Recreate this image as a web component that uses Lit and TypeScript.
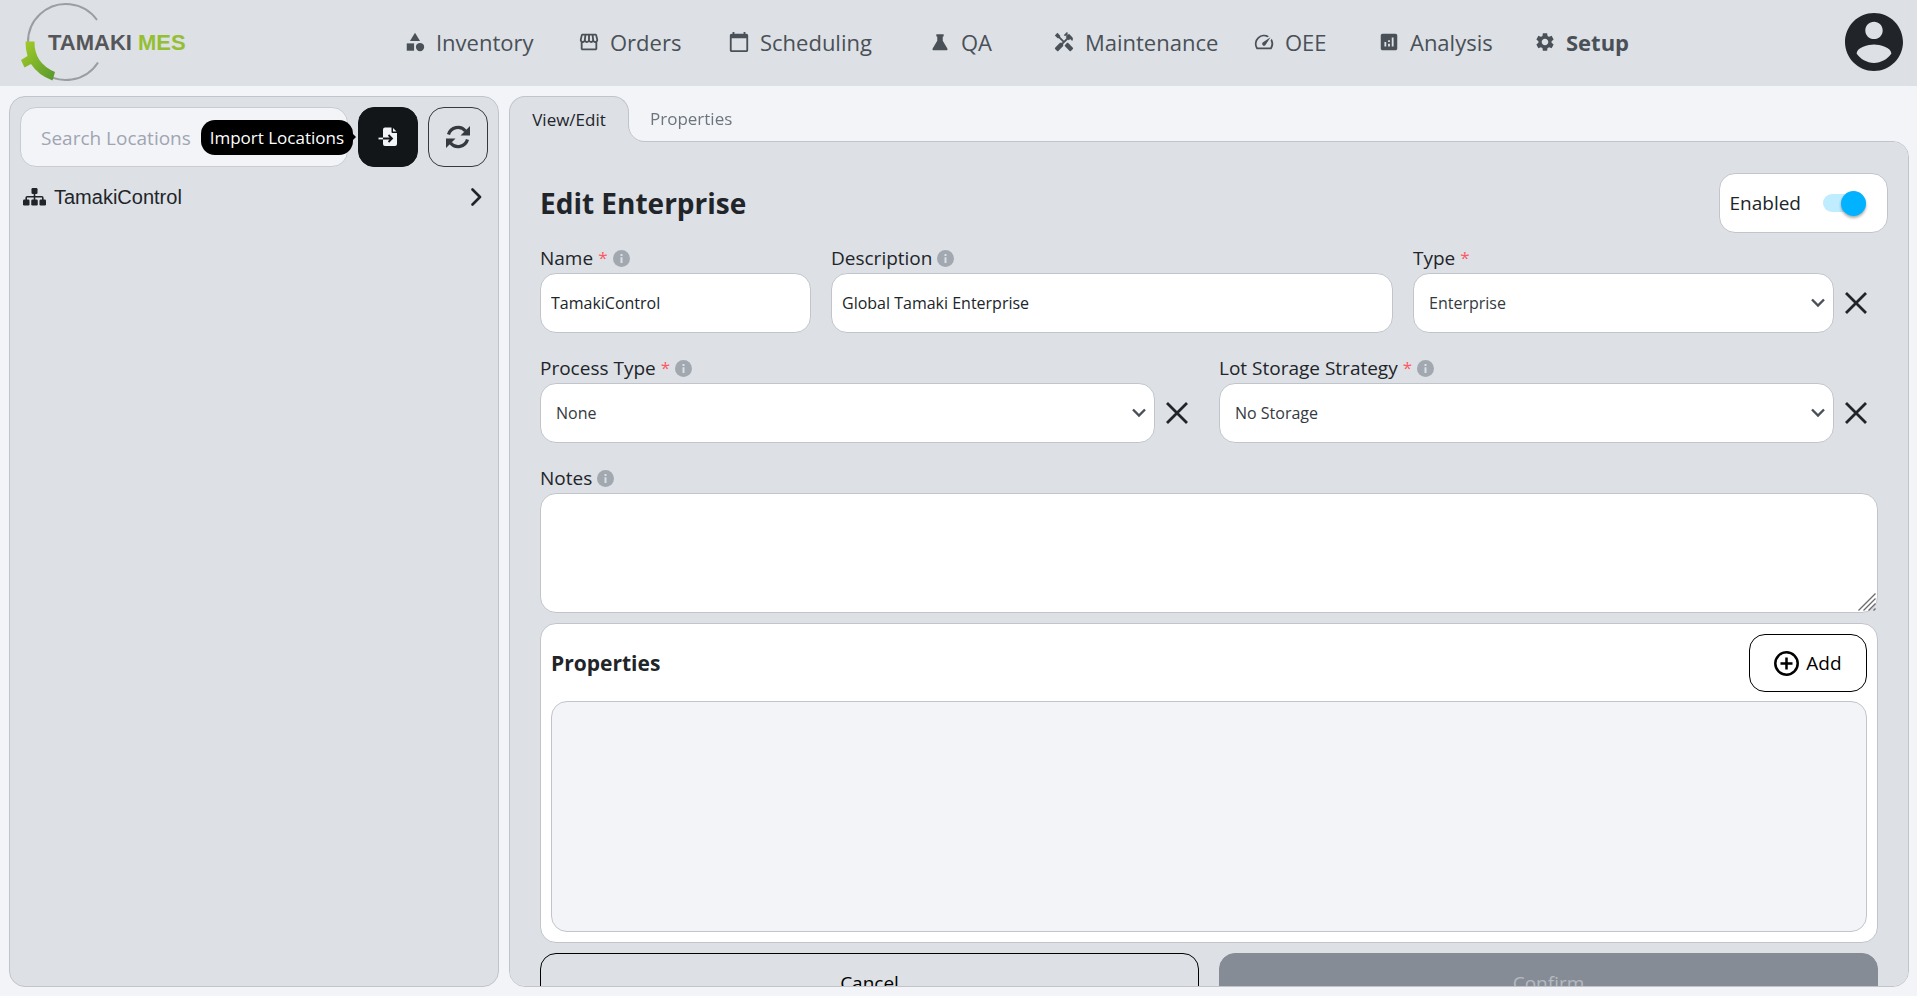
import { LitElement, html, css, svg, nothing, TemplateResult } from "lit";
import { customElement, property } from "lit/decorators.js";
import { classMap } from "lit/directives/class-map.js";

const shapes: Record<string, TemplateResult> = {
  inventory: svg`<path d="M12 2l-5.5 9h11z"/><circle cx="17.5" cy="17.5" r="4.5"/><path d="M3 13.5h8v8H3z"/>`,
  orders: svg`<path d="M21.9 8.89l-1.05-4.37c-.22-.9-1-1.52-1.91-1.52H5.05c-.9 0-1.69.63-1.9 1.52L2.1 8.89c-.24 1.02-.02 2.06.62 2.88.08.11.19.19.28.29V19c0 1.1.9 2 2 2h14c1.1 0 2-.9 2-2v-6.94c.09-.09.2-.18.28-.28.64-.82.87-1.87.62-2.89zm-2.99-3.9l1.05 4.37c.1.42.01.84-.25 1.17-.14.18-.44.47-.94.47-.61 0-1.14-.49-1.21-1.14L16.98 5l1.93-.01zM13 5h1.96l.54 4.52c.05.39-.07.78-.33 1.07-.22.26-.54.41-.95.41-.67 0-1.22-.59-1.22-1.31V5zM8.49 9.52L9.04 5H11v4.69c0 .72-.55 1.31-1.29 1.31-.34 0-.65-.15-.89-.41-.25-.29-.37-.68-.33-1.07zm-4.45-.16L5.05 5h1.97l-.58 4.86c-.08.65-.6 1.14-1.21 1.14-.49 0-.8-.29-.93-.47-.27-.32-.36-.75-.26-1.17zM5 19v-6.03c.08.01.15.03.23.03.87 0 1.66-.36 2.24-.95.6.6 1.4.95 2.31.95.87 0 1.65-.36 2.23-.93.59.57 1.39.93 2.29.93.84 0 1.64-.35 2.24-.95.58.59 1.37.95 2.24.95.08 0 .15-.02.23-.03V19H5z"/>`,
  scheduling: svg`<path d="M20 3h-1V1h-2v2H7V1H5v2H4c-1.1 0-2 .9-2 2v16c0 1.1.9 2 2 2h16c1.1 0 2-.9 2-2V5c0-1.1-.9-2-2-2zm0 18H4V8h16v13z"/>`,
  qa: svg`<path d="M8 3.5h8V6h-1v4.5l5 8.5q.9 2-1 2H5q-1.9 0-1-2l5-8.5V6H8z"/>`,
  maintenance: svg`<path d="M21.67 18.17l-5.3-5.3h-.99l-2.54 2.54v.99l5.3 5.3c.39.39 1.02.39 1.41 0l2.12-2.12c.39-.38.39-1.02 0-1.41z"/><path d="M17.34 10.19l1.41-1.41 2.12 2.12c1.17-1.17 1.17-3.07 0-4.24l-3.54-3.54-1.41 1.41V1.71L15.22 1l-3.54 3.54.71.71h2.83l-1.41 1.41 1.06 1.06-2.89 2.89-4.13-4.13V5.06L4.83 2.04 2 4.87 5.03 7.9h1.41l4.13 4.13-.85.85H7.6l-5.3 5.3c-.39.39-.39 1.02 0 1.41l2.12 2.12c.39.39 1.02.39 1.41 0l5.3-5.3v-2.12l5.15-5.15 1.06 1.05z"/>`,
  oee: svg`<path d="M20.38 8.57l-1.23 1.85a8 8 0 0 1-.22 7.58H5.07A8 8 0 0 1 15.58 6.85l1.85-1.23A10 10 0 0 0 3.35 19a2 2 0 0 0 1.72 1h13.85a2 2 0 0 0 1.74-1 10 10 0 0 0-.27-10.44z"/><path d="M10.59 15.41a2 2 0 0 0 2.83 0l5.66-8.49-8.49 5.66a2 2 0 0 0 0 2.83z"/>`,
  analysis: svg`<path d="M19 3H5c-1.1 0-2 .9-2 2v14c0 1.1.9 2 2 2h14c1.1 0 2-.9 2-2V5c0-1.1-.9-2-2-2zM9 17H7v-5h2v5zm4 0h-2v-3h2v3zm0-5h-2v-2h2v2zm4 5h-2V7h2v10z"/>`,
  setup: svg`<path d="M19.14 12.94c.04-.3.06-.61.06-.94 0-.32-.02-.64-.07-.94l2.03-1.58c.18-.14.23-.41.12-.61l-1.92-3.32c-.12-.22-.37-.29-.59-.22l-2.39.96c-.5-.38-1.03-.7-1.62-.94l-.36-2.54c-.04-.24-.24-.41-.48-.41h-3.84c-.24 0-.43.17-.47.41l-.36 2.54c-.59.24-1.13.57-1.62.94l-2.39-.96c-.22-.08-.47 0-.59.22L2.74 8.87c-.12.21-.08.47.12.61l2.03 1.58c-.05.3-.09.63-.09.94s.02.64.07.94l-2.03 1.58c-.18.14-.23.41-.12.61l1.92 3.32c.12.22.37.29.59.22l2.39-.96c.5.38 1.03.7 1.62.94l.36 2.54c.05.24.24.41.48.41h3.84c.24 0 .44-.17.47-.41l.36-2.54c.59-.24 1.13-.56 1.62-.94l2.39.96c.22.08.47 0 .59-.22l1.92-3.32c.12-.22.07-.47-.12-.61l-2.01-1.58zM12 15.6c-1.98 0-3.6-1.62-3.6-3.6s1.62-3.6 3.6-3.6 3.6 1.62 3.6 3.6-1.62 3.6-3.6 3.6z"/>`,
};

const links: [string, string][] = [
  ["inventory", "Inventory"],
  ["orders", "Orders"],
  ["scheduling", "Scheduling"],
  ["qa", "QA"],
  ["maintenance", "Maintenance"],
  ["oee", "OEE"],
  ["analysis", "Analysis"],
  ["setup", "Setup"],
];

const base = css`
  *, *::before, *::after { box-sizing: border-box; }
  svg { display: block; flex: none; }
  button, input, select, textarea { font: inherit; color: inherit; margin: 0; }
  button { cursor: pointer; }
`;

@customElement("mes-header")
export class MesHeader extends LitElement {
  static styles = [base, css`
    :host { display: block; }
    .bar { display: flex; align-items: center; height: 86px; padding: 0 14px 2px 20px; background: #dde0e5; }
    .logo { width: 168px; height: 84px; flex: none; }
    .logo text { font: bold 22px "Liberation Sans", Arial, sans-serif; }
    .nav { flex: 1; display: grid; grid-template-columns: 174px 150px 201px 124px 200px 125px 156px auto; justify-content: center; }
    .link { display: flex; align-items: center; gap: 10px; font-size: 22px; line-height: 32px; color: #495057; text-decoration: none; }
    .current { font-weight: bold; }
    .avatar { display: block; border: 0; padding: 0; background: none; color: #212529; }
  `];
  render() {
    return html`<header class="bar">
      <svg class="logo" viewBox="20 0 168 84" role="img" aria-label="Tamaki MES">
        <defs><linearGradient id="leaf" x1="0" y1="0" x2="1" y2="1"><stop offset="0" stop-color="#a6ce27"/><stop offset="1" stop-color="#55972f"/></linearGradient></defs>
        <path d="M97 20A38 38 0 1 0 98 62.5" fill="none" stroke="#9a9da1" stroke-width="2"/>
        <path d="M25.5 41.5H34.5Q34 63 55 72L52.5 80.5Q38 75 31 64L24.5 67.5L21 60L27.5 56Q25.5 50 25.5 41.5Z" fill="url(#leaf)"/>
        <text x="48" y="50" fill="#555659">TAMAKI</text>
        <text x="138" y="50" fill="#94bf32">MES</text>
      </svg>
      <nav class="nav" aria-label="Main">
        ${links.map(([icon, text]) => html`<a class=${classMap({ link: true, current: icon === "setup" })} href="#${icon}">
          <svg width="22" height="22" viewBox="0 0 24 24" fill="currentColor" aria-hidden="true">${shapes[icon]}</svg>${text}</a>`)}
      </nav>
      <button class="avatar" type="button" aria-label="Account">
        <svg width="58" height="58" viewBox="2 2 20 20" fill="currentColor"><path d="M12 2C6.48 2 2 6.48 2 12s4.48 10 10 10 10-4.48 10-10S17.52 2 12 2zm0 3c1.66 0 3 1.34 3 3s-1.34 3-3 3-3-1.34-3-3 1.34-3 3-3zm0 14.2c-2.5 0-4.71-1.28-6-3.22.03-1.99 4-3.08 6-3.08 1.99 0 5.97 1.09 6 3.08-1.29 1.94-3.5 3.22-6 3.22z"/></svg>
      </button>
    </header>`;
  }
}

@customElement("location-panel")
export class LocationPanel extends LitElement {
  static styles = [base, css`
    :host { display: block; min-width: 0; }
    .panel { height: 100%; padding: 10px; background: #dde0e5; border: 1px solid #c1c5cb; border-radius: 16px; }
    .tools { display: flex; gap: 10px; height: 60px; }
    .search { flex: 1; min-width: 0; height: 60px; padding: 2px 20px 0; font-size: 19px; background: #f3f4f8; border: 1px solid #c8ccd1; border-radius: 16px; outline: 0; }
    .search::placeholder { color: #9fa5b2; opacity: 1; }
    .tool { position: relative; width: 60px; height: 60px; flex: none; display: grid; place-items: center; padding: 0; border: 1px solid #343a40; border-radius: 16px; background: none; color: #343a40; }
    .dark { background: #121619; border-color: #121619; color: #f3f4f8; }
    .tip { position: absolute; right: calc(100% + 6px); top: 12px; padding: 0 9px; font-size: 17px; line-height: 35px; white-space: nowrap; color: #fff; background: #000; border-radius: 14px; z-index: 2; }
    .tip::after { content: ""; position: absolute; left: calc(100% - 1px); top: 13px; border: 4px solid transparent; border-left-color: #000; border-right: 0; }
    .node { display: flex; align-items: center; gap: 8px; width: 100%; height: 38px; margin-top: 11px; padding: 0 6px 0 3px; border: 0; background: none; text-align: left; font: 20px "Liberation Sans", Arial, sans-serif; color: #212529; }
    .name { flex: 1; }
  `];
  render() {
    return html`<aside class="panel">
      <div class="tools">
        <input class="search" type="search" placeholder="Search Locations" aria-label="Search Locations" />
        <button class="tool dark" type="button" aria-labelledby="tip">
          <svg width="20" height="20" viewBox="0 0 20 20">
            <path d="M7 .5h6.5V5q0 1 1 1H19v11q0 2-2 2H7q-2 0-2-2V2.5q0-2 2-2z" fill="currentColor"/>
            <path d="M15 1v3.5h3.5z" fill="currentColor"/>
            <path d="M5 11.5h8M10.5 8l3.5 3.5-3.5 3.5" fill="none" stroke="#121619" stroke-width="1.8"/>
            <path d="M.5 11.5H5" stroke="currentColor" stroke-width="1.8"/>
          </svg>
          <span class="tip" id="tip" role="tooltip">Import Locations</span>
        </button>
        <button class="tool" type="button" aria-label="Refresh">
          <svg width="24" height="24" viewBox="0 0 24 24">
            <path d="M2.5 9.5A9.8 9.8 0 0 1 19.5 6M21.5 14.5A9.8 9.8 0 0 1 4.5 18" fill="none" stroke="currentColor" stroke-width="3.2"/>
            <path d="M24 1v9.5h-9.5zM0 23v-9.5h9.5z" fill="currentColor"/>
          </svg>
        </button>
      </div>
      <button class="node" type="button">
        <svg width="23" height="18" viewBox="0 0 23 18" fill="currentColor">
          <rect x="8.5" y="0" width="6" height="6" rx="1.2"/><rect x="0" y="11.5" width="6.5" height="6" rx="1.2"/><rect x="8.25" y="11.5" width="6.5" height="6" rx="1.2"/><rect x="16.5" y="11.5" width="6.5" height="6" rx="1.2"/>
          <path d="M11.5 5v7M3.2 12V9.7q0-1 1-1h14.6q1 0 1 1V12" fill="none" stroke="currentColor" stroke-width="1.6"/>
        </svg>
        <span class="name">TamakiControl</span>
        <svg width="11" height="18" viewBox="0 0 11 18"><path d="M1.5 1.5L9 9l-7.5 7.5" fill="none" stroke="currentColor" stroke-width="2.6" stroke-linecap="round" stroke-linejoin="round"/></svg>
      </button>
    </aside>`;
  }
}

@customElement("enterprise-form")
export class EnterpriseForm extends LitElement {
  @property() heading = "Edit Enterprise";
  static styles = [base, css`
    :host { display: flex; flex-direction: column; min-width: 0; min-height: 0; }
    .tabs { display: flex; height: 46px; margin-bottom: -1px; position: relative; z-index: 1; }
    .tab { position: relative; padding: 0 21px; border: 0; background: none; font-size: 17px; line-height: 46px; color: #6c757d; }
    .active { width: 120px; background: #dde0e5; border: 1px solid #c1c5cb; border-bottom: 0; border-radius: 16px 16px 0 0; color: #212529; }
    .curve { position: absolute; left: 100%; bottom: 0; }
    .panel { flex: 1; min-height: 0; overflow: hidden auto; scrollbar-width: none; padding: 31px 30px 30px 30px; background: #dde0e5; border: 1px solid #c1c5cb; border-radius: 0 16px 16px 16px; }
    .head { display: flex; justify-content: space-between; align-items: center; margin-right: -10px; }
    h1 { margin: 0; font-size: 28px; line-height: 40px; }
    h2 { margin: 0; font-size: 21px; line-height: 30px; }
    .switch { display: flex; align-items: center; gap: 22px; height: 60px; padding: 0 21px 0 10px; font-size: 19px; background: #fff; border: 1px solid #c1c5cb; border-radius: 16px; }
    .toggle { appearance: none; display: grid; align-items: center; width: 43px; height: 25px; }
    .toggle::before, .toggle::after { content: ""; grid-area: 1 / 1; border-radius: 13px; }
    .toggle::before { height: 18px; background: #bfecff; }
    .toggle::after { width: 25px; height: 25px; background: #00b2ff; justify-self: end; box-shadow: 0 2px 3px #0005; }
    .toggle:not(:checked)::after { justify-self: start; }
    .grid { display: grid; grid-template-columns: repeat(14, minmax(0, 1fr)); gap: 20px; margin-top: 10px; }
    .c3 { grid-column: span 3; } .c5 { grid-column: span 5; } .c6 { grid-column: span 6; } .c7 { grid-column: span 7; } .c14 { grid-column: span 14; }
    .label { display: flex; align-items: center; gap: 5px; height: 30px; font-size: 19px; line-height: 30px; }
    .req { color: #ff5861; font-size: 17px; }
    .box { display: block; width: 100%; height: 60px; padding: 0 10px; font-size: 16px; background: #fff; border: 1px solid #c1c5cb; border-radius: 16px; outline: 0; }
    .notes { height: 120px; padding: 10px; resize: vertical; }
    .notes::-webkit-resizer { display: none; }
    .area { display: grid; }
    .area > * { grid-area: 1 / 1; }
    .grip { place-self: end; margin: 0 2px 2px 0; pointer-events: none; }
    .pick { display: grid; grid-template-columns: minmax(0, 1fr) 44px; align-items: center; }
    .pick > .box { grid-area: 1 / 1; appearance: none; padding: 0 30px 0 15px; color: #343a40; }
    .chev { grid-area: 1 / 1; justify-self: end; margin-right: 9px; pointer-events: none; color: #495057; }
    .clear { grid-area: 1 / 2; display: grid; place-items: center; height: 44px; padding: 0; border: 0; background: none; }
    .card { margin-top: 10px; padding: 10px; background: #fff; border: 1px solid #c1c5cb; border-radius: 16px; }
    .cardhead { display: flex; justify-content: space-between; align-items: center; }
    .btn { display: flex; align-items: center; justify-content: center; gap: 7px; height: 58px; font-size: 19px; color: #000; background: none; border: 1px solid #000; border-radius: 16px; }
    .add { width: 118px; }
    .list { height: 231px; margin-top: 9px; background: #f3f4f8; border: 1px solid #c1c5cb; border-radius: 16px; }
    .actions { display: grid; grid-template-columns: 1fr 1fr; gap: 20px; margin-top: 10px; }
    .actions .btn { height: 60px; }
    .actions .confirm { background: #868c95; border-color: #868c95; color: #b5bac1; }
  `];
  private label(id: string, text: string, req: boolean, info: boolean) {
    return html`<label class="label" for=${id}>${text}${req ? html`<span class="req">*</span>` : nothing}${info
      ? html`<svg width="17" height="17" viewBox="0 0 17 17" aria-hidden="true"><circle cx="8.5" cy="8.5" r="8.5" fill="#a1a8b0"/><path d="M7.5 4h2v2h-2zM7.5 7.2h2V13h-2z" fill="#dde0e5"/></svg>` : nothing}</label>`;
  }
  private text(id: string, label: string, value: string, req: boolean, col: string) {
    return html`<div class=${col}>${this.label(id, label, req, true)}<input class="box" id=${id} type="text" .value=${value} /></div>`;
  }
  private pick(id: string, label: string, value: string, info: boolean, col: string) {
    return html`<div class=${col}>${this.label(id, label, true, info)}
      <div class="pick">
        <select class="box" id=${id}><option>${value}</option></select>
        <svg class="chev" width="14" height="10" viewBox="0 0 14 10"><path d="M1 1.5l6 6 6-6" fill="none" stroke="currentColor" stroke-width="2.4"/></svg>
        <button class="clear" type="button" aria-label="Clear ${label}"><svg width="22" height="22" viewBox="0 0 22 22"><path d="M1 1l20 20M21 1L1 21" stroke="currentColor" stroke-width="2.8"/></svg></button>
      </div></div>`;
  }
  render() {
    return html`
      <div class="tabs" role="tablist">
        <button class="tab active" role="tab" aria-selected="true">View/Edit
          <svg class="curve" width="17" height="17" viewBox="0 0 17 17" aria-hidden="true"><path d="M0 0H.5A16 16 0 0 0 17 16.5V17H0Z" fill="#dde0e5"/><path d="M.5 0A16 16.5 0 0 0 17 16.5" fill="none" stroke="#c1c5cb"/></svg>
        </button>
        <button class="tab" role="tab" aria-selected="false">Properties</button>
      </div>
      <form class="panel">
        <div class="head">
          <h1>${this.heading}</h1>
          <label class="switch">Enabled<input class="toggle" type="checkbox" role="switch" checked /></label>
        </div>
        <div class="grid">
          ${this.text("name", "Name", "TamakiControl", true, "c3")}
          ${this.text("description", "Description", "Global Tamaki Enterprise", false, "c6")}
          ${this.pick("type", "Type", "Enterprise", false, "c5")}
          ${this.pick("process", "Process Type", "None", true, "c7")}
          ${this.pick("storage", "Lot Storage Strategy", "No Storage", true, "c7")}
          <div class="c14">${this.label("notes", "Notes", false, true)}
            <div class="area"><textarea class="box notes" id="notes"></textarea>
              <svg class="grip" width="18" height="18" viewBox="0 0 18 18" aria-hidden="true"><path d="M.5 17.5L17.5 .5M5.5 17.5l12-12M10.5 17.5l7-7M15.5 17.5l2-2" stroke="#6b6b6b" stroke-width="1.3"/></svg>
            </div>
          </div>
        </div>
        <section class="card">
          <div class="cardhead">
            <h2>Properties</h2>
            <button class="btn add" type="button"><svg width="25" height="25" viewBox="0 0 25 25"><circle cx="12.5" cy="12.5" r="11.2" fill="none" stroke="currentColor" stroke-width="2.5"/><path d="M12.5 6.5v12M6.5 12.5h12" stroke="currentColor" stroke-width="2.5"/></svg>Add</button>
          </div>
          <div class="list"></div>
        </section>
        <div class="actions">
          <button class="btn" type="button">Cancel</button>
          <button class="btn confirm" type="submit" disabled>Confirm</button>
        </div>
      </form>`;
  }
}

@customElement("app-root")
export class AppRoot extends LitElement {
  static styles = [base, css`
    :host { display: flex; flex-direction: column; height: 100vh; overflow: hidden; background: #f3f4f8; color: #212529; font-family: "Open Sans", "Noto Sans", sans-serif; }
    .main { flex: 1; min-height: 0; display: grid; grid-template-columns: minmax(0, 7fr) minmax(0, 20fr); grid-template-rows: minmax(0, 1fr); gap: 10px; padding: 10px 8px 9px 9px; }
  `];
  render() {
    return html`<mes-header></mes-header>
      <main class="main"><location-panel></location-panel><enterprise-form></enterprise-form></main>`;
  }
}
